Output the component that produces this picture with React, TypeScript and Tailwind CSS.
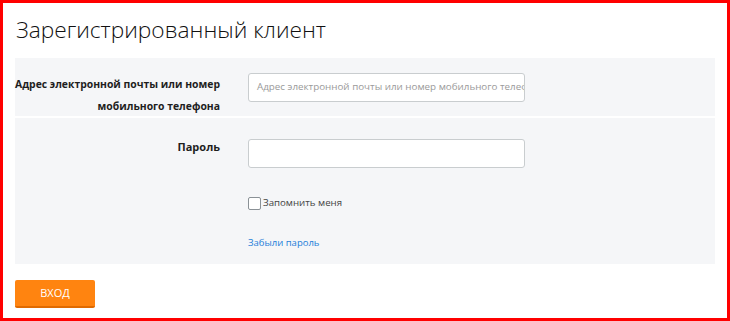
const font = { fontFamily: '"Open Sans", "Noto Sans", sans-serif' };

export default function App() {
  return (
    <div
      className="w-[730px] h-[321px] border-[3px] border-[#ff0000] bg-white px-[12px] pt-[11px] text-[#222]"
      style={font}
    >
      <h1 className="text-[22.7px] leading-[32px] font-light text-[#111] pl-[1px]">
        Зарегистрированный клиент
      </h1>

      <div className="mt-[12px] w-[700px]">
        <div className="h-[58px] bg-[#f5f6f8] flex pt-[15px]">
          <label className="w-[205px] text-right text-[10.4px] leading-[22px] font-bold text-[#1e1e1e] whitespace-nowrap">
            Адрес электронной почты или номер
            <br />
            мобильного телефона
          </label>
          <div className="ml-[28px] w-[277px] h-[29px] bg-white border border-[#c9cdcf] rounded-[3px] flex items-center px-[8px] overflow-hidden">
            <span className="text-[9.8px] text-[#9a9a9a] whitespace-nowrap">
              Адрес электронной почты или номер мобильного телефона
            </span>
          </div>
        </div>

        <div className="h-[1px] bg-white" />

        <div className="h-[146px] bg-[#f5f6f8] mt-[1px] flex pt-[21px]">
          <label className="w-[205px] text-right text-[11px] leading-[14px] font-bold text-[#1e1e1e] pt-[1px]">
            Пароль
          </label>
          <div className="ml-[28px] w-[277px] flex flex-col">
            <div className="h-[29px] bg-white border border-[#c9cdcf] rounded-[3px]" />
            <div className="mt-[28px] flex items-center">
              <span className="w-[13px] h-[13px] bg-white border border-[#8a9196] rounded-[2px]" />
              <span className="ml-[2px] text-[9.7px] leading-[14px] text-[#444]">
                Запомнить меня
              </span>
            </div>
            <a className="mt-[26px] text-[9.5px] leading-[14px] text-[#1e7ed8]">
              Забыли пароль
            </a>
          </div>
        </div>
      </div>

      <button className="mt-[16px] w-[80px] h-[28px] bg-[#ff8410] border-b-[2px] border-[#e06a00] rounded-[2px] text-white text-[11px] flex items-center justify-center pt-[1px]">
        ВХОД
      </button>
    </div>
  );
}
